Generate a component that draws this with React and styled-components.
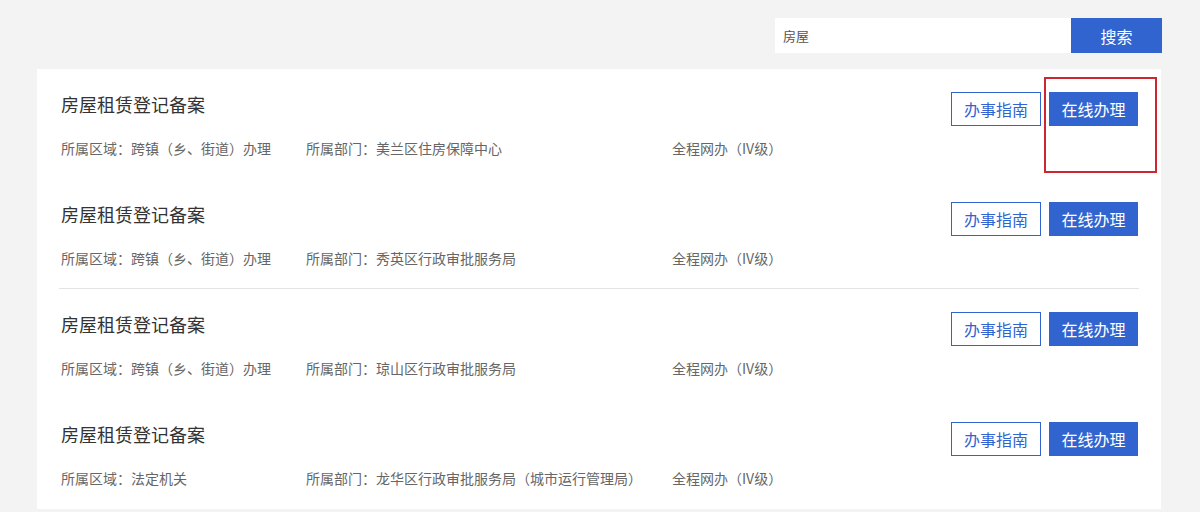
import React from "react";
import styled, { createGlobalStyle } from "styled-components";

const Global = createGlobalStyle`
  html, body { margin: 0; padding: 0; background: #f3f3f3; }
  body { font-family: "Noto Sans CJK SC", "Noto Sans", sans-serif; }
  * { box-sizing: border-box; }
`;

const Page = styled.div`
  width: 1124px;
  margin-left: 37px;
  padding-top: 18px;
  display: flex;
  flex-direction: column;
  gap: 16px;
`;

const SearchBar = styled.div`
  display: flex;
  justify-content: flex-end;
  margin-right: -1px;
`;

const SearchInput = styled.input`
  width: 296px;
  height: 35px;
  border: none;
  outline: none;
  background: #fff;
  padding: 0 8px;
  font-family: inherit;
  font-size: 13px;
  color: #555;
`;

const SearchButton = styled.button`
  width: 91px;
  height: 35px;
  border: none;
  background: #3264d0;
  color: #fff;
  font-family: inherit;
  font-size: 16px;
  cursor: pointer;
`;

const Card = styled.div`
  background: #fff;
  padding: 0 22px;
  display: flex;
  flex-direction: column;
`;

const Row = styled.div`
  position: relative;
  height: 110px;
  display: flex;
  justify-content: space-between;
  align-items: flex-start;
  padding-top: 21px;
  border-bottom: 1px solid ${(p) => (p.$divider ? "#e4e4e4" : "transparent")};
`;

const Info = styled.div`
  display: flex;
  flex-direction: column;
  gap: 20px;
  padding-left: 2px;
`;

const Title = styled.div`
  font-size: 18px;
  line-height: 28px;
  color: #333;
`;

const Meta = styled.div`
  display: grid;
  grid-template-columns: 245px 366px auto;
  font-size: 14px;
  line-height: 20px;
  color: #666;
  white-space: nowrap;
`;

const Actions = styled.div`
  display: flex;
  gap: 8px;
  margin-top: 2px;
  margin-right: 1px;
`;

const Btn = styled.button`
  height: 34px;
  width: ${(p) => (p.$primary ? "89px" : "90px")};
  border: 1px solid #3264d0;
  background: ${(p) => (p.$primary ? "#3264d0" : "#fff")};
  color: ${(p) => (p.$primary ? "#fff" : "#3264d0")};
  font-family: inherit;
  font-size: 16px;
  padding: 0;
  cursor: pointer;
`;

const Highlight = styled.div`
  position: absolute;
  top: 8px;
  right: -18px;
  width: 113px;
  height: 96px;
  border: 2px solid #cc2631;
  pointer-events: none;
`;

const items = [
  { area: "跨镇（乡、街道）办理", dept: "美兰区住房保障中心" },
  { area: "跨镇（乡、街道）办理", dept: "秀英区行政审批服务局" },
  { area: "跨镇（乡、街道）办理", dept: "琼山区行政审批服务局" },
  { area: "法定机关", dept: "龙华区行政审批服务局（城市运行管理局）" },
];

export default function App() {
  return (
    <>
      <Global />
      <Page>
        <SearchBar>
          <SearchInput defaultValue="房屋" />
          <SearchButton>搜索</SearchButton>
        </SearchBar>
        <Card>
          {items.map((it, i) => (
            <Row key={i} $divider={i === 1}>
              <Info>
                <Title>房屋租赁登记备案</Title>
                <Meta>
                  <span>所属区域：{it.area}</span>
                  <span>所属部门：{it.dept}</span>
                  <span>全程网办（IV级）</span>
                </Meta>
              </Info>
              <Actions>
                <Btn>办事指南</Btn>
                <Btn $primary>在线办理</Btn>
              </Actions>
              {i === 0 && <Highlight />}
            </Row>
          ))}
        </Card>
      </Page>
    </>
  );
}
